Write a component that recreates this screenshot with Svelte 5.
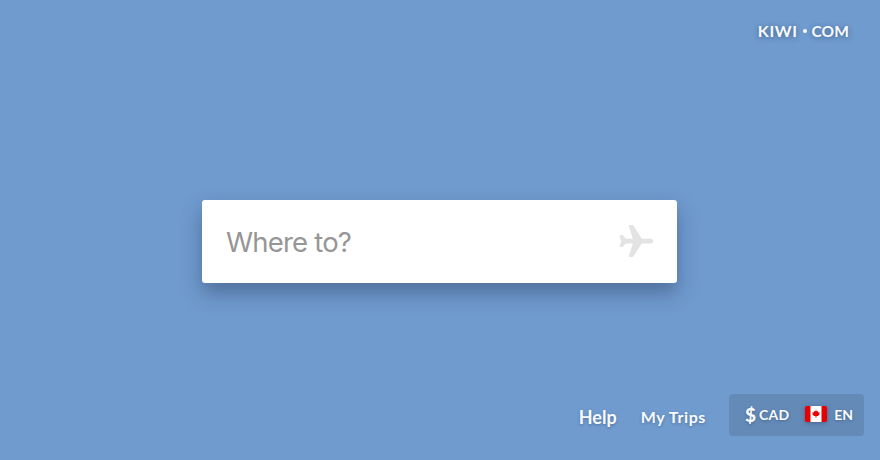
<script>
  let destination = $state('');
</script>

<div class="page">
  <header>
    <div class="logo" aria-label="Kiwi.com"><span>KIWI</span><i></i><span class="com">COM</span></div>
  </header>
  <main>
    <label class="search">
      <input placeholder="Where to?" bind:value={destination} />
      <svg width="35" height="34" viewBox="0 0 35 34" aria-hidden="true">
        <path d="M1.1 11H3.6L6.7 14.7H13.8L10 2.4C9.6 1.3 10 1 11 1H13.1C13.8 1 14.3 1.3 14.7 1.9L22.8 14.7H31.5C35.3 14.7 35.3 19.4 31.5 19.4H22.8L14.7 32C14.3 32.7 13.8 33 13.1 33H11C10 33 9.6 32.7 10 31.6L13.8 19.4H6.7L3.6 23H1.6C.8 23 .5 22.6 .7 22L2.2 17.1L.5 12Z" />
      </svg>
    </label>
  </main>
  <footer>
    <span class="help">Help</span>
    <span class="trips">My Trips</span>
    <div class="locale">
      <b>$</b><span class="currency">CAD</span>
      <svg width="22" height="16" viewBox="0 0 22 16" aria-hidden="true">
        <rect width="22" height="16" rx="2" fill="#e80000" />
        <path fill="#fff" d="M5.5 0h11v16h-11z" />
        <path fill="#f00000" d="M11 4l1 1.5 1.1-.5-.1 1.5 1.5-.4-.2 1.4.4.8-1.7 1.6h-1.5l-.1 1.8h-.8l-.1-1.8H9L7.3 8.3l.4-.8-.2-1.4 1.5.4L8.9 5l1.1.5z" />
      </svg>
      <span class="lang">EN</span>
    </div>
  </footer>
</div>

<style>
  .page {
    height: 460px;
    box-sizing: border-box;
    display: flex;
    flex-direction: column;
    background: #709bcf;
    color: #f8fafc;
    font-family: Lato, "Liberation Sans", sans-serif;
    font-weight: 700;
    overflow: hidden;
    text-shadow: 0 1px 3px rgba(40, 65, 100, .45);
  }
  header {
    height: 200px;
    display: flex;
    justify-content: flex-end;
    align-items: flex-start;
    padding: 21px 31px 0 0;
    box-sizing: border-box;
  }
  .logo {
    display: flex;
    align-items: center;
    font-size: 16px;
    line-height: 20px;
    letter-spacing: .6px;
    text-shadow: 0 1px 5px rgba(35, 60, 95, .6);
  }
  .logo .com { font-size: 15.5px; letter-spacing: .1px; }
  .logo i {
    width: 4px;
    height: 4px;
    border-radius: 50%;
    background: #f8fafc;
    margin: 0 5px 0 5px;
  }
  main { display: flex; justify-content: center; padding-right: 1px; }
  .search {
    width: 475px;
    height: 83px;
    box-sizing: border-box;
    padding: 0 23px 0 24px;
    display: flex;
    align-items: center;
    background: #fff;
    border-radius: 3px;
    box-shadow: 0 10px 20px rgba(40, 60, 90, .45);
  }
  input {
    flex: 1;
    min-width: 0;
    padding: 0;
    border: 0;
    outline: 0;
    background: none;
    font: 400 27.5px/36px Inter, sans-serif;
    letter-spacing: -.8px;
  }
  input::placeholder { color: #969696; opacity: 1; text-shadow: none; }
  .search svg { fill: #e3e3e3; margin-bottom: 2px; }
  footer {
    margin-top: auto;
    padding: 0 16px 24px 0;
    display: flex;
    justify-content: flex-end;
    align-items: center;
    line-height: 22px;
  }
  .help { font-size: 18px; margin-right: 24px; padding-top: 4px; }
  .trips { font-size: 16px; letter-spacing: .6px; margin-right: 23px; padding-top: 4px; }
  .locale {
    width: 135px;
    height: 42px;
    padding: 0 11px 0 16px;
    box-sizing: border-box;
    border-radius: 4px;
    background: #648ab7;
    display: flex;
    align-items: center;
    font-size: 14px;
  }
  .currency { letter-spacing: .3px; }
  .locale b { font-size: 19px; width: 14px; }
  .locale svg { margin-left: auto; margin-right: 7px; margin-bottom: 2px; filter: drop-shadow(0 1px 2px rgba(35, 60, 95, .5)); }
</style>
